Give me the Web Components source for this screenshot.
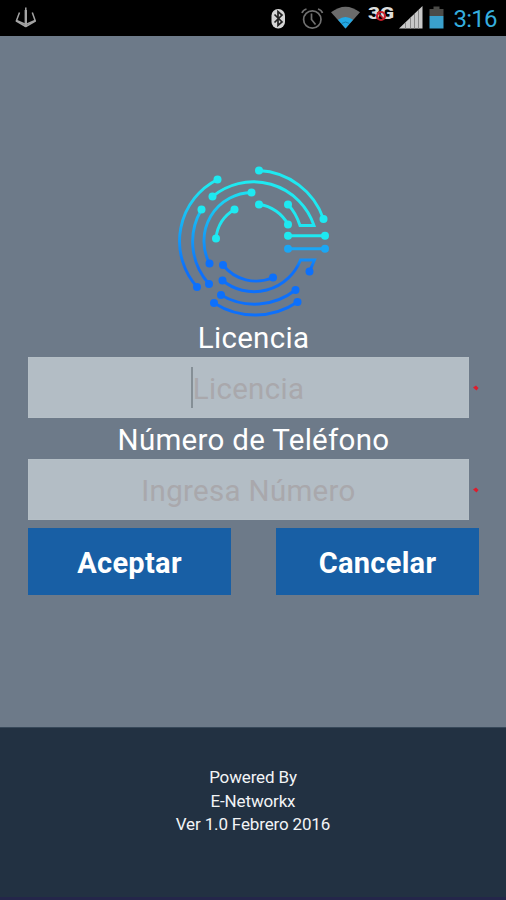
<!DOCTYPE html>
<html lang="es">
<head>
<meta charset="utf-8">
<title>Licencia</title>
<style>
    body {
        margin: 0;
        font-family: Roboto, "Liberation Sans", sans-serif;
    }
</style>
</head>
<body>
<license-screen></license-screen>
<script>
function define(name, html, setup) {
    const template = document.createElement('template');
    template.innerHTML = html;
    window.customElements.define(name, class extends HTMLElement {
        constructor() {
            super();
            this.attachShadow({mode: 'open'});
            this.shadowRoot.appendChild(template.content.cloneNode(true));
        }
        connectedCallback() {
            if (setup) setup(this, this.shadowRoot);
        }
    });
}

define('status-bar', `
<style>
    :host {
        display: block;
        height: 36px;
        background: #000;
    }
    svg { display: block; }
    .time { font-size: 24px; }
    .net { font-size: 17px; font-weight: 900; }
</style>
<svg width="506" height="36" viewBox="0 0 506 36">
    <g fill="none" stroke="#a4a4a4" stroke-width="1.5" stroke-linejoin="round">
        <path d="M19.500 12.500L16.300 21 25.800 26.500 35.300 21 32.300 12.500"/>
        <path d="M16.500 20.500l9.300 4 9.300-4"/>
        <path d="M25.800 10v17" stroke-width="2.4"/>
        <path d="M25.800 7.500v4" stroke-width="1.5"/>
    </g>
    <rect x="271.500" y="9" width="13.500" height="19.500" rx="6.500" fill="#d6d6d6"/>
    <path d="M274.500 14.500l7.500 7.500-4 3.500v-14l4 3.500-7.500 7.500" fill="none" stroke="#222" stroke-width="1.700"/>
    <g fill="none" stroke="#707070" stroke-width="1.700">
        <circle cx="312.300" cy="19.500" r="8.700"/>
        <path d="M311.500 13.500v6l4 5M302 13q1-3 4.500-4M318 9q3.500 1 4.500 4"/>
    </g>
    <path d="M331 12.300Q345.500 1 360 12.300L345.500 28.500Z" fill="#6b6b6b"/>
    <path d="M338 19.800Q345.500 14 353 19.800L345.500 28.500Z" fill="#23a8e4"/>
    <path d="M341.500 23.500q4-3 8 0" fill="none" stroke="#157aa8" stroke-width="1"/>
    <text class="net" x="368" y="19" fill="#ddd" textLength="26" lengthAdjust="spacingAndGlyphs">3G</text>
    <circle cx="381" cy="16" r="4" fill="none" stroke="#c9202c" stroke-width="2.200"/>
    <path d="M378.500 13.500l5 5" stroke="#c9202c" stroke-width="1.600"/>
    <path d="M399 28.500L422.500 6v22.500Z" fill="#c8c8c8"/>
    <path d="M405.500 22.500v6M410.500 18v10.500M414.500 14v14.500M418.500 10v18.500" stroke="#888" stroke-width="1"/>
    <path d="M429.500 9h4V6.500h6V9h4v7h-14Z" fill="#4b4b48"/>
    <rect x="429.500" y="16" width="14" height="12.500" fill="#3aa0cc"/>
    <text class="time" x="453.500" y="27" fill="#35aede" textLength="44">3:16</text>
</svg>
`);

define('circuit-logo', `
<style>
    :host { display: block; width: 154px; height: 154px; }
    svg { display: block; }
    .trace { fill: none; stroke-width: 2.9; }
</style>
<svg width="154" height="154" viewBox="177 164 154 154">
    <defs>
        <linearGradient id="fade" gradientUnits="userSpaceOnUse" x1="0" y1="215" x2="0" y2="268">
            <stop offset="0" stop-color="#1ee9f1"/>
            <stop offset=".4" stop-color="#1ee0f2"/>
            <stop offset="1" stop-color="#0d70fb"/>
        </linearGradient>
        <linearGradient id="side" gradientUnits="userSpaceOnUse" x1="0" y1="185" x2="0" y2="268">
            <stop offset="0" stop-color="#1ee9f1"/>
            <stop offset="1" stop-color="#0d70fb"/>
        </linearGradient>
    </defs>
    <g class="trace" stroke="url(#side)">
        <path d="M217.500 179.500A69 69 0 0 0 197 287"/>
        <path d="M201.500 209.500A63 63 0 0 0 209 284"/>
        <path d="M251.500 192.500A48.500 48.500 0 0 0 209.500 263.500"/>
    </g>
    <g class="trace" stroke="url(#fade)">
        <path d="M259 170.500A72 72 0 0 1 323.500 219"/>
        <path d="M212.500 196.500A64 64 0 0 1 314 225.500H300Q296 213 288 204.500"/>
        <path d="M234.500 209.500A38 38 0 0 0 216 238"/>
        <path d="M259 204.500A38 38 0 0 1 288 224.500"/>
        <path d="M223 265A42 42 0 0 0 273 277.500"/>
        <path d="M222.500 280.500A50 50 0 0 0 300.500 260H314.500L309.500 271.500"/>
        <path d="M221 295A66 66 0 0 0 295.500 290"/>
        <path d="M214 303A76 76 0 0 0 297.500 302"/>
    </g>
    <path class="trace" stroke="#1ee9f1" d="M288 235.700h37"/>
    <path class="trace" stroke="#1ba7f5" d="M288 248.700h37"/>
    <g id="dots"></g>
</svg>
`, (host, root) => {
    const cyan = '#1ee9f1', blue = '#0d70fb', mid = '#1ba7f5';
    const dots = [
        [217.5, 179.5, cyan], [197, 287, blue], [201.5, 209.5, cyan], [209, 284, blue],
        [251.5, 192.5, cyan], [209.5, 263.5, blue], [259, 170.5, cyan], [323.5, 219, cyan],
        [212.5, 196.5, cyan], [288, 204.5, cyan], [234.5, 209.5, cyan], [216, 238.5, cyan],
        [259, 204.5, cyan], [288, 224.5, cyan], [223, 265, blue], [273, 277.5, blue],
        [222.5, 280.5, blue], [309.5, 271.5, blue], [221, 295, blue], [295.5, 290, blue],
        [214, 303, blue], [297.5, 302, blue], [288, 235.7, cyan], [325, 235.7, cyan],
        [288, 248.7, mid], [325, 248.7, mid]
    ];
    root.querySelector('#dots').innerHTML = dots
        .map(([x, y, fill]) => `<circle cx="${x}" cy="${y}" r="4" fill="${fill}"/>`).join('');
});

define('text-entry', `
<style>
    :host { display: block; font-size: 29.5px; letter-spacing: .3px; }
    .label {
        height: 41px;
        padding-top: 2px;
        box-sizing: border-box;
        line-height: 41px;
        text-align: center;
        color: #fff;
    }
    .row { display: flex; align-items: center; gap: 4px; }
    .box {
        display: flex;
        align-items: center;
        justify-content: center;
        width: 441px;
        height: 61px;
        padding-top: 3px;
        box-sizing: border-box;
        background: #b3bdc5;
        box-shadow: inset 0 0 1px #c8d0d5;
        color: #a9a8ac;
    }
    .caret { display: none; width: 2px; height: 41px; margin: -3px 0 0 -2px; background: #858f96; }
    :host([active]) .caret { display: block; }
    .dot { display: block; }
</style>
<div class="label"><slot></slot></div>
<div class="row">
    <div class="box"><span class="caret"></span><span class="hint"></span></div>
    <svg class="dot" width="6" height="6" viewBox="0 0 6 6"><path d="M0 2.500L3 .5 5.500 3 3.500 5.500Z" fill="#e01c2c"/></svg>
</div>
`, (host, root) => {
    root.querySelector('.hint').textContent = host.getAttribute('hint');
});

define('action-button', `
<style>
    :host { display: block; width: 203px; }
    button {
        display: block;
        width: 100%;
        height: 67px;
        padding: 3px 0 0;
        border: 0;
        background: #185fa5;
        color: #fff;
        font: bold 29px Roboto, "Liberation Sans", sans-serif;
        letter-spacing: .3px;
    }
</style>
<button><slot></slot></button>
`);

define('page-footer', `
<style>
    :host {
        display: block;
        height: 173px;
        padding-top: 38px;
        box-sizing: border-box;
        border-top: 1px solid #374859;
        border-bottom: 3px solid #24264a;
        background: #223142;
        color: #f2f4f6;
        font-size: 17px;
        line-height: 23.5px;
        letter-spacing: -.15px;
        text-align: center;
    }
</style>
<slot></slot>
`);

define('license-screen', `
<style>
    :host {
        display: flex;
        flex-direction: column;
        width: 506px;
        height: 900px;
        overflow: hidden;
        background: #6d7a89;
    }
    main { flex: 1; padding: 128px 27px 0 28px; }
    circuit-logo { margin-left: 149px; }
    .buttons { display: flex; justify-content: space-between; margin-top: 8px; }
    .first { margin-top: -2px; }
</style>
<status-bar></status-bar>
<main>
    <circuit-logo></circuit-logo>
    <text-entry class="first" hint="Licencia" active>Licencia</text-entry>
    <text-entry hint="Ingresa Número">Número de Teléfono</text-entry>
    <div class="buttons">
        <action-button>Aceptar</action-button>
        <action-button>Cancelar</action-button>
    </div>
</main>
<page-footer>
    <div>Powered By</div>
    <div>E-Networkx</div>
    <div>Ver 1.0 Febrero 2016</div>
</page-footer>
`);
</script>
</body>
</html>
